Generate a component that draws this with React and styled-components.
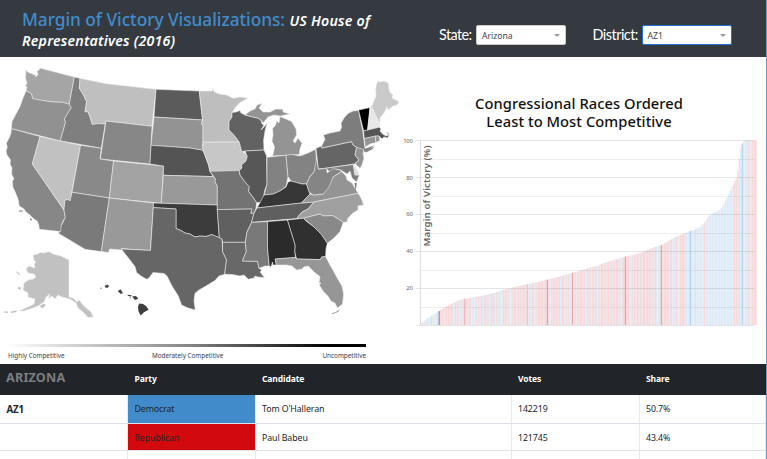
import React from "react";
import styled, { createGlobalStyle } from "styled-components";

const GlobalStyle = createGlobalStyle`
  * { box-sizing: border-box; }
  body {
    margin: 0;
    background: #fff;
    color: #212529;
    font-family: "Noto Sans", "Open Sans", sans-serif;
    overflow: hidden;
  }
`;

const Page = styled.div`
  width: 767px;
  height: 459px;
  display: flex;
  flex-direction: column;
  overflow: hidden;
  border-right: 1px solid #6b96d6;
`;

const Header = styled.header`
  flex: none;
  height: 57px;
  display: flex;
  align-items: flex-start;
  background: #343a40;
`;

const Title = styled.h1`
  margin: 0;
  width: 417px;
  padding: 11px 0 0 22px;
  font-size: 17.3px;
  line-height: 18.5px;
  font-weight: 500;
  letter-spacing: -0.04px;
  color: #428bca;
  white-space: nowrap;
`;

const Subtitle = styled.em`
  color: #fff;
  font-size: 14.2px;
  font-weight: 600;
  letter-spacing: 0.22px;
`;

const Field = styled.div`
  display: flex;
  align-items: center;
  gap: 5px;
  height: 20px;
  margin: 25px 0 0 ${(p) => p.$offset}px;
`;

const FieldLabel = styled.label`
  width: ${(p) => p.$width}px;
  color: #fff;
  font: 14.4px/20px Lato, sans-serif;
  letter-spacing: ${(p) => p.$tracking}px;
  white-space: nowrap;
`;

const SelectBox = styled.div`
  width: 90px;
  height: 20px;
  padding: 1px 5px 0;
  display: flex;
  align-items: center;
  justify-content: space-between;
  border: 1px solid ${(p) => (p.$focused ? "#1f75d8" : "#ccc")};
  border-radius: 2px;
  background: #fff;
  color: #444;
  font-size: 8.6px;
`;

const Caret = styled.span`
  border: 3px solid transparent;
  border-top-color: #999;
  border-bottom: 0;
`;

const Main = styled.main`
  flex: none;
  height: 307px;
  display: flex;
`;

const MapPanel = styled.section`
  width: 402px;
  display: flex;
  flex-direction: column;
`;

const Legend = styled.div`
  width: 359px;
  margin: 0 0 0 7px;
`;

const GradientBar = styled.div`
  height: 3px;
  background: linear-gradient(90deg, #fff, #888 50%, #000 90%);
`;

const LegendLabels = styled.div`
  display: grid;
  grid-template-columns: 144px 1fr auto;
  padding: 3.5px 0 0 1px;
  font-size: 6.35px;
  line-height: 9px;
  color: #3a3a4a;
  white-space: nowrap;
`;

const ChartPanel = styled.section`
  width: 364px;
  padding-top: 38px;
`;

const ChartTitle = styled.h2`
  margin: -1px 0 1px -10px;
  height: 37px;
  text-align: center;
  font-size: 14.7px;
  line-height: 18.2px;
  font-weight: 500;
  letter-spacing: 0.06px;
  color: #111;
`;

const Drawing = styled.svg`
  display: block;
  flex: none;
  font-family: "Noto Sans", sans-serif;
`;

const Table = styled.div`
  display: grid;
  grid-template-columns: 128px 127.5px 256px 128px 1fr;
  grid-template-rows: 31px 29px 27px 20px;
  flex: none;
`;

const HeadCell = styled.div`
  padding: 0 0 0 6.5px;
  background: #212529;
  color: #fff;
  font-size: 8.5px;
  line-height: 30px;
  font-weight: 700;
  letter-spacing: -0.1px;
`;

const StateName = styled(HeadCell)`
  padding-left: 6px;
  color: #7c7d7f;
  font-size: 12.6px;
  line-height: 27px;
  letter-spacing: 0.2px;
`;

const Cell = styled.div`
  padding: 0 0 0 6.5px;
  border-right: 1px solid #e9e9ee;
  border-bottom: 1px solid #dfe0ea;
  background: ${(p) => p.$fill || "#fff"};
  background-clip: ${(p) => (p.$fill ? "padding-box" : "border-box")};
  color: #212529;
  font-size: 8.8px;
  line-height: 28px;
  letter-spacing: -0.1px;
`;

const District = styled(Cell)`
  font-size: 9.7px;
  font-weight: 700;
  line-height: 30px;
`;

const STATES = [
  ["WA", "#a5a5a5", "26,70 28,72.3 33,74.3 36,75.3 35,77 38,75 37,71 39,70 40,68 74.3,77 69.3,104.3 63,102.3 52,102 43,100.6 36,99.6 32.6,98.6 31.5,94 28,91.5 26,91 27,87 25.3,86 27,83 26,80 25.5,77"],
  ["OR", "#919191", "26,91 28,91.5 31.5,94 32.6,98.6 43,100.6 52,102 63,102.3 69.3,104.3 71.3,107.6 68,113 64.3,119 65.6,122 60.3,141 11.3,128.6 12,121.6 16,114 20,106.6 23,98"],
  ["CA", "#878787", "11.3,128.6 40,136.6 32.3,164 64,210 65.3,217.6 63,221 61.3,225.6 61.6,229 60.6,231.6 39.3,229.3 38.8,225 37.3,221 34,219 30,215 26,212 24,209 19.3,206 18,199 15,191.6 13,187.5 12.3,181 14,179 11.6,174 12,168 10,164 10.6,160 7,155 6,151 7.3,147 6.3,143.3 9.6,137 11,133"],
  ["NV", "#c1c1c1", "40,136.6 80.6,145.3 70,201 68,199.5 65,200 64,210 32.3,164"],
  ["ID", "#7f7f7f", "74.3,77 80,78.3 79.3,88.3 83,94 86.6,101.6 85,111.6 88,111.6 90,117 92.3,124 98,123 105.3,123.6 101.3,148.3 60.3,140.8 65.6,122 64.3,119 71.3,107.6 69.3,104.3"],
  ["MT", "#bfbfbf", "80,78.3 105,83.5 156,89.3 152,126.3 106,121 105.3,124 98,123.6 92.3,124.6 90,117 88,111.6 85,112 86.6,101.6 83,94 79.3,88.3"],
  ["WY", "#878787", "106,121 152,126.3 150,164 100.3,159"],
  ["UT", "#898989", "80.6,145.3 101.3,148.3 100,159 113.6,161 109.3,198 72,192.3"],
  ["CO", "#a3a3a3", "113.6,161 163.6,166 161.3,203.3 109.3,198"],
  ["AZ", "#7a7a7a", "72,192.3 109.3,198 101.3,251.6 85,249.3 58.3,233.3 60.6,231 61.3,225.6 65.3,217.6 64,210 65,200 68,199.5 70,201"],
  ["NM", "#999", "109.3,198 153.6,203 150.3,250.6 121.3,248.6 121.6,250 109.5,249 108.6,252.6 101.3,251.6"],
  ["ND", "#5b5b5b", "156,89.3 199.3,91 200,98 201,106.6 202.6,120 154,117"],
  ["SD", "#939393", "154,117 202.6,120 201.6,123.3 203,126.6 203,142.3 202.5,147 203.6,151.6 201,149.7 196.6,149.3 190,148 151,145.3"],
  ["NE", "#545454", "151,145.3 190,148 196.6,149.3 201,149.7 203.6,151.6 206,158 208.6,165 210,171.6 213.3,176.6 163.3,175.3 163.6,166 150,164"],
  ["KS", "#999", "163.3,175.3 213.3,176.6 215.5,179 215,181.6 217.3,186 217.3,205 161.3,203.3"],
  ["OK", "#3c3c3c", "153.6,203 217.3,205 217.3,209.6 219.3,237.6 215,236 211.6,234.6 206,236.5 200,236 195,237 190,234 185,233 180,230 176,228.6 176,209 153.3,207.6"],
  ["TX", "#666", "153.3,207.6 176,209 176,228.6 180,230 185,233 190,234 195,237 200,236 206,236.5 211.6,234.6 219.3,237.6 222,239 222.6,251.6 226.6,260 224.6,274.3 219,276 215,280.6 205,286.6 199,290 195,293.3 194,301 195.3,310 188,308 181.6,305 178.3,296 172,286 167,276 164,273.5 153,272.5 149,278 146.6,279.3 141,276 136.6,272.6 135,266.6 130,260 121.3,249 150.5,250.4"],
  ["MN", "#bebebe", "199.3,91 212.3,91 212.6,88.3 214.3,91.8 219,94 226.6,95 233.3,98.3 240,97 248.3,98.3 240,102.5 236,106.6 232,112.6 232,117 229,121.6 229,130 234,135 239.3,142 203,142.3 203,126.6 201.6,123.3 202.6,120 201,106.6"],
  ["IA", "#c7c7c7", "203,142.3 239.3,142 241.6,151.6 245,153 247.3,156.6 246,161 241.6,165 242,168 239.3,171 210,171.6 208.6,165 203.6,151.6 202.5,147"],
  ["MO", "#737373", "210,171.3 239.3,170.6 240,175 245,182 249.3,186.6 248.6,191.6 253,197 256.6,202.6 256,208.3 254,213.3 250.6,213.3 252,209 217.3,209.6 217.3,186 215,181.6 215.5,179"],
  ["AR", "#606060", "217.3,209.6 252,209 250.6,213.3 254,213.3 251.6,222.3 247,232 245.3,242.3 222.6,242.3 222,239 219.3,237.6"],
  ["LA", "#686868", "222.6,242.3 245.3,242.3 246.3,251.6 242.3,261 257.6,261.3 259,268.3 262,270 260,272 264.5,277.5 258,277 255,276 254,278 248.3,279.3 244,275 240,276 232,274.5 224.6,274.3 226.6,260 222.6,251.6"],
  ["MS", "#797979", "251.6,222.3 267.6,221.6 267.5,248 269.3,266 265,266 259,268.3 257.6,261.3 242.3,261 246.3,251.6 245.3,242.3 247,232"],
  ["WI", "#626262", "232,112.6 236,112 240,110.6 241,113 245,115 253,117 258.3,118.3 261,120 262,124 264,125 261,130 264,127 267,123 265,131 263.6,140 264,150 245,151 241.6,151.6 239.3,142 234,135 229,130 229,121.6 232,117"],
  ["IL", "#575757", "245,151 264,150 266.6,156 267,184 264.5,191 263.3,199 260,202.6 256.6,202.6 253,197 248.6,191.6 249.3,186.6 245,182 240,175 239.3,170.6 242,168 241.6,165 246,161 247.3,156.6"],
  ["MI", "#949494", "272.6,156 299.3,154.6 300,149 302,143.3 298,138 295,143 293,141 296.6,135 296,129 291.6,121.6 286,119 280,116.6 279,123 277,121 275,126 272.6,128.3 273,135 272,141 274.6,147"],
  ["UP", "#949494", "245,115 250,111 255,109 257,105 262,103.5 259,108 263,112 270,112 276,109 283,109.3 283,112 290,114 280,116 274,115 268,117 263.3,123 261,120 258.3,118.3"],
  ["IN", "#828282", "267,157.3 286,155.3 288,176.6 286,186.6 280,191 273.3,194 264,195 267,184"],
  ["OH", "#838383", "286,155.3 292,154.5 300,156 308,153 315.6,149.3 316.6,163.3 314,172 310,176.6 306.6,184 302,184 296.6,182.6 291,181 288,176.6"],
  ["KY", "#373737", "260,202.6 264,195 273.3,194 280,191 286,187 288,182 291,181 296.6,182.6 302,184 306.6,184 310,194 301.6,203 257,208"],
  ["TN", "#5f5f5f", "257,208 301.6,203 314,202 308,209 302,212 296.6,218.6 251.6,222.3 254,213.3"],
  ["PA", "#656565", "316,148.3 321.6,146 322,148 351.6,141.6 353,145 356.6,147.3 355,155 359,160 354.3,164 318.3,169.3"],
  ["NY", "#7d7d7d", "321.6,148 321.6,146 325,139.3 323.3,135 330,133 340,131 341.6,127 341,123.3 344,118 348.3,113.3 353,111 358.6,110.6 360,118 362.6,130 365,148.5 375,145 369,150 364.6,151.6 356.6,147.3 353,145 351.6,141.6"],
  ["VT", "#000", "358.6,110 370,107.6 367.6,130 363.6,130.8"],
  ["NH", "#e8e8e8", "370,107.6 371.6,105 380,125 379.3,127.3 367.6,130"],
  ["ME", "#cacaca", "371.6,106.6 376,96 375.6,89 376.6,84 378,81 380,82 384,81 388.3,83 389.6,92 393,95 392,98 399,101.6 397,105 393,106 388.3,110 387,107 384,113 380,118 380,124"],
  ["MA", "#555", "363.6,130.8 367.6,130 379.3,127.3 381,129 380,131 382.6,134 386,136 388.3,135 386,131.5 389,134 388,138 384,137 382,139 379,136 376,136 364.3,138.6"],
  ["CT", "#949494", "364.3,138.6 375.3,136 376,142.6 370,144 365.3,147"],
  ["RI", "#949494", "375.3,136 379,136 380,140.6 376,142.6"],
  ["NJ", "#929292", "356.6,147.3 364,149.5 363,154 364,158 362,165 360,168.3 355,163.8 359,160 355,155"],
  ["MD", "#7d7d7d", "318.3,169.3 353.3,164.5 355,175 359.3,175 356.6,182 352,178 350,171 347,174 341,170 336,169 330,172 326.6,169"],
  ["DE", "#ddd", "353.3,164.5 355,166 359.3,175 355,175"],
  ["VA", "#949494", "301.6,203 310,194 313.3,195 323.3,194 333.3,176.6 341.6,171.6 346,176 347,180 352,183 355,188.3 358.3,193.3 314,202"],
  ["WV", "#858585", "316.6,158 318.3,169.3 326.6,168.3 327,173 333,168.6 340,170 341.6,171.6 333.3,176.6 329,187 323.3,194 313.3,195 309,192 306.6,184 310,176.6 314,172"],
  ["NC", "#a0a0a0", "314,202 358.3,193.3 362,200 363.3,205 358,206 358,210 353,213 348,218 347,222 343.3,222.3 332.6,215.6 323.3,216 320,214 303.3,218.3 296.6,218.6 302,212 308,209"],
  ["SC", "#898989", "303.3,218.3 320,214 323.3,216 332.6,215.6 343.3,222.3 340,231.6 334,238 327.3,243.3 321,234 314,227"],
  ["GA", "#303030", "287.3,220 303.3,218.3 306,221 314,227 321,234 327.3,243.3 326,249 325.6,256.6 321.6,257 320.6,259.6 296.6,259 294.7,252 295,245"],
  ["AL", "#2b2b2b", "267.6,221.6 287.3,220 295,245 294.7,252 295.6,257.5 275.3,259 276.3,265 273,265 272.5,262 271,267 269.3,266 267.5,248"],
  ["FL", "#969696", "275.3,259 295.6,257.5 296.6,259 320.6,259.6 321.6,257 325.6,256.6 330,265 334,272 337.3,278.3 342,286 343.6,294 342.6,304 337.3,308 335,303 331,301 328.3,296.6 323,291 319.3,285 321,283 319,283 320,276.6 314,272 308.3,266 304,267 302,269 296.6,270 292,266 286.6,265 276.3,265"],
  ["AK", "#c1c1c1", "33,255 38,254 40,252.5 44,253 49,251.6 53,254 61,256 69,260 69,297 73,298 77,302 79,300 84,306 91,312 93.5,317 88,317.5 83,312 78,308 76,303 70,299 62,297 58,295 55,299 52,296 48,299 50,294 46,297 44,302 38,306 30,309 24,311 19,311 28,307 34,304 35,299 31,298 28,297 28,293 23,290 24,283 28,280 33,279 36,277 34,274 28,273 26,269 29,266 35,268 34,264 36,262 34,260"],
];

const ISLANDS = [
  ["#c1c1c1", "16,271 19,273 20,275.5 17,273"],
  ["#c1c1c1", "18,287 21,287.5 21,289.6 18,289"],
  ["#c1c1c1", "40,306 44,303.5 46,305 42,308.5"],
  ["#c1c1c1", "11,311.5 16,310.6 17,312 11,313"],
  ["#c1c1c1", "4,311.5 8,311.5 8,313 4,312.5"],
  ["#777", "19,210.4 23,210.4 22.5,211.4 19,211.4"],
  ["#777", "30,218 32,219.5 31.5,220.5 30,219.4"],
  ["#3f3f3f", "100,288.3 101.4,287.5 101.6,288.8"],
  ["#3f3f3f", "104.7,286 107.5,284.5 109,286 107.8,287.8 105.3,287.6"],
  ["#3f3f3f", "117.8,291 120.5,289.2 123,293.2 120.4,293.8"],
  ["#3f3f3f", "127.5,294.8 131.7,295.2 131,296.4 128,296"],
  ["#3f3f3f", "129.5,297.4 130.8,297.5 130.5,298.8"],
  ["#3f3f3f", "132,296.5 136,296 138.4,298.8 135,300"],
  ["#3f3f3f", "139,303.4 143,304 146,306 148.6,309.8 144,312.2 140.7,315.4 138.5,311.5 138,307"],
  ["#888", "364,151 369,149 374.5,146.5 372,149.6 366,152.4"],
  ["#969696", "331,313.5 336,312 340,309 338,312 333,314"],
  ["#ccc", "363,199 364,204 360,208 363.5,204"],
  ["#7d7d7d", "354.5,183 356.8,183 355.7,191"],
];

const UsMap = () => (
  <Drawing width="402" height="287" viewBox="0 57 402 287">
    {STATES.map(([id, fill, points]) => (
      <polygon key={id} points={points} fill={fill} stroke="#eee" strokeWidth="0.55" strokeLinejoin="round" />
    ))}
    {ISLANDS.map(([fill, points]) => (
      <polygon key={points} points={points} fill={fill} />
    ))}
  </Drawing>
);

/* [x position, margin of victory] samples along the ordered races */
const CURVE = [
  [420.5, 0.5], [423, 1.5], [427, 3.5], [433, 5.5], [439, 7.5], [446, 10], [454, 12.2], [459, 13.5], [465, 14.2],
  [480, 15.6], [494, 17.3], [512, 20.4], [527, 22], [547, 24.5], [560, 26.3], [572, 28.2], [587, 30.6],
  [597, 32], [604, 33.6], [625, 37], [634, 38], [645, 40], [654, 42], [661, 43.2], [667, 45], [675, 47.6],
  [683, 49.4], [690, 50.8], [700, 53], [704, 55], [708, 58.5], [713, 60.6], [720, 62.3], [724, 65.5],
  [728, 70], [732, 75], [736, 79], [738, 84], [740, 94], [742, 98], [744.5, 100], [758, 100],
];

const marginAt = (x) => {
  const i = Math.max(1, CURVE.findIndex(([px]) => px >= x));
  const [x0, y0] = CURVE[i - 1];
  const [x1, y1] = CURVE[i];
  return y0 + ((y1 - y0) * (x - x0)) / (x1 - x0);
};

const democratShare = (x) => {
  if (x > 751) return 0;
  if (x > 743) return 0.4;
  if (x > 738) return 0.5;
  if (x > 733) return 0.1;
  if (x > 705) return 0.95;
  if (x > 690) return 0.85;
  if (x > 665) return 0.5;
  if (x < 437) return 0.65;
  return 0.24;
};

const RACES = Array.from({ length: 224 }, (_, i) => {
  const x = 420.5 + i * 1.5;
  const noise = Math.abs(Math.sin((i + 1) * 127.1) * 43758.5453) % 1;
  return { x, margin: marginAt(x + 0.7), fill: noise < democratShare(x) ? "#dfebf5" : noise > 0.6 || x > 743 ? "#fad8da" : "#efe0e4" };
});

const HIGHLIGHTS = [
  [439.2, "#4690cf"], [464.8, "#f0a5a8"], [527.4, "#c4cfe2"], [547.3, "#de8e94"], [572.4, "#f0a0a4"],
  [625.3, "#df9499"], [661.3, "#e69398"], [690.4, "#a9cfee"], [742.3, "#b1d4f0"],
];

const yOf = (margin) => 325 - margin * 1.847;

const MarginChart = () => (
  <Drawing width="364" height="210" viewBox="402 132 364 210">
    {RACES.map(({ x, margin, fill }) => (
      <rect key={x} x={x} y={yOf(margin)} width="1.5" height={margin * 1.847} fill={fill} />
    ))}
    {[0, 10, 20, 30, 40, 50, 60, 70, 80, 90, 100].map((v) => (
      <path key={v} d={`M${v % 20 ? 420 : 416} ${Math.round(yOf(v)) + 0.5}H754`} stroke="#8c8f9b" strokeOpacity={v % 20 ? 0.14 : 0.24} />
    ))}
    <path d="M420.5 140V325" stroke="#dcdce2" />
    {HIGHLIGHTS.map(([x, color]) => (
      <path key={x} d={`M${x} ${yOf(marginAt(x))}V325`} stroke={color} />
    ))}
    {[20, 40, 60, 80, 100].map((v) => (
      <text key={v} x="412.7" y={yOf(v) + 2.3} fontSize="5.9" letterSpacing="-0.2" fill="#666" textAnchor="end">{v}</text>
    ))}
    <text transform="translate(429.5 246.5) rotate(-90)" fontSize="9.6" fontWeight="600" fill="#666" textLength="101">
      Margin of Victory (%)
    </text>
  </Drawing>
);

const RESULTS = [
  { district: "AZ1", party: "Democrat", color: "#428bca", candidate: "Tom O'Halleran", votes: "142219", share: "50.7%" },
  { district: "", party: "Republican", color: "#d20a0e", candidate: "Paul Babeu", votes: "121745", share: "43.4%" },
  { district: "", party: "", candidate: "", votes: "", share: "" },
];

const Select = ({ label, value, labelWidth, offset, tracking, focused }) => (
  <Field $offset={offset}>
    <FieldLabel $width={labelWidth} $tracking={tracking}>{label}</FieldLabel>
    <SelectBox $focused={focused}>
      {value}
      <Caret />
    </SelectBox>
  </Field>
);

export default function App() {
  return (
    <Page>
      <GlobalStyle />
      <Header>
        <Title>
          Margin of Victory Visualizations: <Subtitle>US House of<br />Representatives (2016)</Subtitle>
        </Title>
        <Select label="State:" value="Arizona" labelWidth={32} offset={22} tracking={-0.6} />
        <Select label="District:" value="AZ1" labelWidth={44} offset={26.5} tracking={-0.5} focused />
      </Header>
      <Main>
        <MapPanel>
          <UsMap />
          <Legend>
            <GradientBar />
            <LegendLabels>
              <span>Highly Competitive</span>
              <span>Moderately Competitive</span>
              <span>Uncompetitive</span>
            </LegendLabels>
          </Legend>
        </MapPanel>
        <ChartPanel>
          <ChartTitle>Congressional Races Ordered<br />Least to Most Competitive</ChartTitle>
          <MarginChart />
        </ChartPanel>
      </Main>
      <Table>
        <StateName>ARIZONA</StateName>
        <HeadCell>Party</HeadCell>
        <HeadCell>Candidate</HeadCell>
        <HeadCell>Votes</HeadCell>
        <HeadCell>Share</HeadCell>
        {RESULTS.map((r, i) => (
          <React.Fragment key={i}>
            <District>{r.district}</District>
            <Cell $fill={r.color}>{r.party}</Cell>
            <Cell>{r.candidate}</Cell>
            <Cell>{r.votes}</Cell>
            <Cell>{r.share}</Cell>
          </React.Fragment>
        ))}
      </Table>
    </Page>
  );
}
